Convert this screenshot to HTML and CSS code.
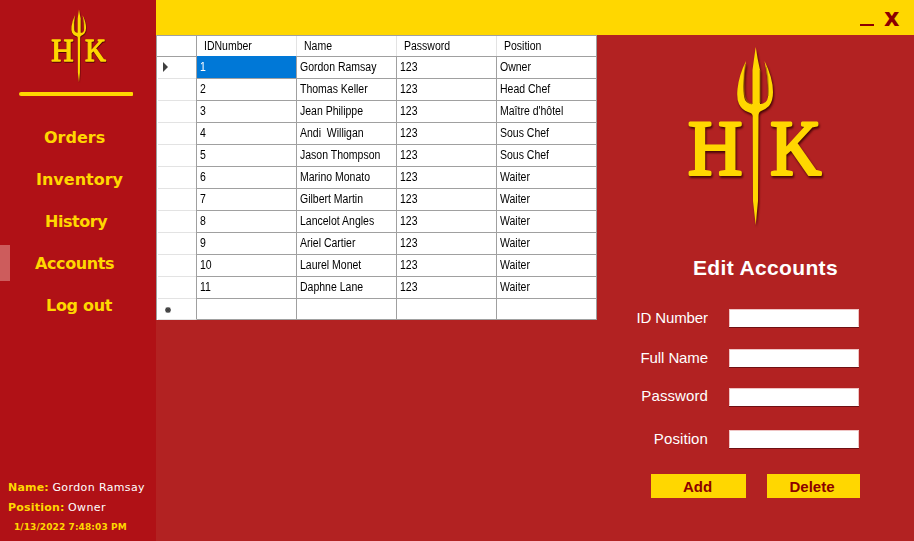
FILE: index.html
```html
<!DOCTYPE html>
<html lang="en">
<head>
<meta charset="utf-8">
<title>Accounts</title>
<link rel="stylesheet" href="styles.css">
</head>
<body>
<div class="app">
  <aside class="sidebar">
    <svg class="logo-small" viewBox="0 0 140 184">
      <g class="mark">
        <text x="2.900" y="128" textLength="54.400" lengthAdjust="spacingAndGlyphs">H</text>
        <text x="85.200" y="128" textLength="51" lengthAdjust="spacingAndGlyphs">K</text>
        <path d="M70.700 1L72.700 13L75 24V58Q82 58 83 51Q84 36 79.500 15Q88 32 88 46Q88 55 84 60Q81 63 76 65Q73.500 66 73.500 70L73 155L70.700 179L68 155L67.700 70Q67.500 67 63 66Q57 64 54 58Q51.500 53 52.500 43Q54 29 61 15Q57.500 35 59 50Q60 58 67.500 58V24L69 13Z"/>
        <path class="shade" d="M60.500 18Q58 33 59.500 49Q61 57 67 58M75 24V57M81 21Q84 34 83 50"/>
      </g>
    </svg>
    <div class="rule"></div>
    <nav class="nav">
      <a class="orders">Orders</a>
      <a class="inventory">Inventory</a>
      <a class="history">History</a>
      <a class="accounts active">Accounts</a>
      <a class="logout">Log out</a>
    </nav>
    <footer class="session">
      <p><b>Name:</b> <span>Gordon Ramsay</span></p>
      <p><b>Position:</b> <span>Owner</span></p>
      <time>1/13/2022 7:48:03 PM</time>
    </footer>
  </aside>
  <main class="main">
    <header class="titlebar">
      <svg width="74" height="35"><path class="minimize" d="M20 24h14v2H20z"/></svg>
      <span class="close">x</span>
    </header>
    <div class="content">
      <div class="grid">
        <div class="row head"><i></i><span><b>IDNumber</b></span><span><b>Name</b></span><span><b>Password</b></span><span><b>Position</b></span></div>
        <div class="row"><i><svg width="6" height="10"><path d="M0 0L5 5L0 10z"/></svg></i><span class="selected"><b>1</b></span><span><b>Gordon Ramsay</b></span><span><b>123</b></span><span><b>Owner</b></span></div>
        <div class="row"><i></i><span><b>2</b></span><span><b>Thomas Keller</b></span><span><b>123</b></span><span><b>Head Chef</b></span></div>
        <div class="row"><i></i><span><b>3</b></span><span><b>Jean Philippe</b></span><span><b>123</b></span><span><b>Maître d'hôtel</b></span></div>
        <div class="row"><i></i><span><b>4</b></span><span><b>Andi&nbsp; Willigan</b></span><span><b>123</b></span><span><b>Sous Chef</b></span></div>
        <div class="row"><i></i><span><b>5</b></span><span><b>Jason Thompson</b></span><span><b>123</b></span><span><b>Sous Chef</b></span></div>
        <div class="row"><i></i><span><b>6</b></span><span><b>Marino Monato</b></span><span><b>123</b></span><span><b>Waiter</b></span></div>
        <div class="row"><i></i><span><b>7</b></span><span><b>Gilbert Martin</b></span><span><b>123</b></span><span><b>Waiter</b></span></div>
        <div class="row"><i></i><span><b>8</b></span><span><b>Lancelot Angles</b></span><span><b>123</b></span><span><b>Waiter</b></span></div>
        <div class="row"><i></i><span><b>9</b></span><span><b>Ariel Cartier</b></span><span><b>123</b></span><span><b>Waiter</b></span></div>
        <div class="row"><i></i><span><b>10</b></span><span><b>Laurel Monet</b></span><span><b>123</b></span><span><b>Waiter</b></span></div>
        <div class="row"><i></i><span><b>11</b></span><span><b>Daphne Lane</b></span><span><b>123</b></span><span><b>Waiter</b></span></div>
        <div class="row"><i class="new"><svg width="6" height="6"><path class="star" d="M3 0V6M0 3H6M.8.8L5.200 5.200M5.200.8L.8 5.200"/></svg></i><span></span><span></span><span></span><span></span></div>
      </div>
      <section class="editor">
        <svg class="logo-large" viewBox="0 0 140 184">
          <g class="mark">
            <text x="2.900" y="128" textLength="54.400" lengthAdjust="spacingAndGlyphs">H</text>
            <text x="85.200" y="128" textLength="51" lengthAdjust="spacingAndGlyphs">K</text>
            <path d="M70.700 1L72.700 13L75 24V58Q82 58 83 51Q84 36 79.500 15Q88 32 88 46Q88 55 84 60Q81 63 76 65Q73.500 66 73.500 70L73 155L70.700 179L68 155L67.700 70Q67.500 67 63 66Q57 64 54 58Q51.500 53 52.500 43Q54 29 61 15Q57.500 35 59 50Q60 58 67.500 58V24L69 13Z"/>
            <path class="shade" d="M60.500 18Q58 33 59.500 49Q61 57 67 58M75 24V57M81 21Q84 34 83 50"/>
          </g>
        </svg>
        <h1>Edit Accounts</h1>
        <form class="fields">
          <label for="id">ID Number</label><input id="id">
          <label for="name">Full Name</label><input id="name">
          <label class="wide raised" for="pass">Password</label><input id="pass">
          <label class="wide" for="pos">Position</label><input id="pos">
        </form>
        <div class="actions"><button class="add">Add</button><button class="delete">Delete</button></div>
      </section>
    </div>
  </main>
</div>
</body>
</html>
```
FILE: styles.css
```css
* { box-sizing: border-box; }
body { margin: 0; overflow: hidden; }
.app { display: flex; width: 914px; height: 541px; background: #b22222; }

.mark { fill: #ffd700; filter: drop-shadow(1.5px 2px 1px rgba(50, 0, 0, .85)); }
.mark text { font: 78px "Liberation Serif", serif; stroke: #ffd700; stroke-width: 3.200; stroke-linejoin: round; }
.shade { fill: none; stroke: #9c6a00; stroke-width: 1.300; opacity: .65; }

.sidebar { width: 156px; display: flex; flex-direction: column; background: #b01116; font-family: "DejaVu Sans", sans-serif; }
.logo-small { width: 57.4px; height: 75.400px; margin: 9px 0 0 49.5px; }
.rule { width: 114px; height: 4px; margin: 7.600px 0 0 19px; border-radius: 2px 1px 1px 2px; background: #ffd700; }
.nav { display: flex; flex-direction: column; gap: 6px; margin-top: 23px; }
.nav a { height: 36px; line-height: 37px; font-size: 16px; font-weight: bold; color: #ffd700; border-left: 10px solid transparent; white-space: nowrap; }
.nav .active { border-left-color: #cd5c5c; }
.orders { padding-left: 34px; }
.inventory { padding-left: 26px; }
.history { padding-left: 35px; letter-spacing: -.45px; }
.accounts { padding-left: 25px; letter-spacing: -.4px; }
.logout { padding-left: 36px; letter-spacing: -.3px; }
.session { margin: auto 0 0 8px; height: 64px; font-size: 11px; color: #ffd700; white-space: nowrap; }
.session p { margin: 0; height: 20px; line-height: 21px; }
.session b { letter-spacing: .2px; }
.session span { color: #fff; letter-spacing: .38px; }
.session time { display: block; padding-left: 6px; line-height: 21px; font-size: 9px; font-weight: bold; letter-spacing: .1px; }

.main { flex: 1; display: flex; flex-direction: column; }
.titlebar { height: 35px; display: flex; justify-content: flex-end; background: #ffd700; color: #8b0000; }
.titlebar svg { width: 44px; }
.minimize { fill: #8b0000; }
.close { width: 30px; font: bold 24px/37px "DejaVu Sans", sans-serif; }
.content { flex: 1; display: flex; }

.grid { width: 441px; height: 285px; background: #fff; border: solid #a0a0a0; border-width: 1px 0 0 1px; color: #000; font: 12px "Liberation Sans", sans-serif; }
.row { display: grid; grid-template-columns: 40px repeat(4, 100px); height: 22px; line-height: 22px; }
.row span { padding-left: 3px; border: solid #a0a0a0; border-width: 0 1px 1px 0; white-space: nowrap; }
.row b { display: inline-block; font-weight: normal; transform: scaleX(.875); transform-origin: left; }
.row i { display: flex; align-items: center; padding-left: 5px; margin-left: 1px; border-right: 1px solid #a0a0a0; border-bottom: 1px solid #e3e3e3; }
.row svg { fill: #404040; }
.row .new { padding: 2px 0 0 7px; }
.star { stroke: #404040; stroke-width: 1.300; }
.row .selected { background: #0078d7; color: #fff; }
.head { height: 20px; line-height: 20px; }
.head span { padding-left: 7px; border-right-color: #e3e3e3; }
.head span:last-child { border-right-color: #a0a0a0; }
.head i { margin: 0; border-bottom-color: #a0a0a0; }

.editor { flex: 1; display: flex; flex-direction: column; font-family: "Liberation Sans", sans-serif; color: #fff; }
.logo-large { width: 140px; height: 184px; margin: 11px 0 0 88px; }
h1 { margin: 26px 0 0 96px; height: 24px; font-size: 21px; line-height: 24px; letter-spacing: .35px; white-space: nowrap; }
.fields { display: grid; grid-template-columns: 111px 130px; grid-template-rows: 40px 39px 42px 18px; column-gap: 21px; margin-top: 29px; align-items: start; }
.fields label { text-align: right; font-size: 15px; line-height: 18px; letter-spacing: -.1px; }
.fields .wide { letter-spacing: .1px; }
.fields .raised { margin-top: -1px; }
.fields input { width: 130px; height: 18px; padding: 0; background: #fff; border: 1px solid #efc4c4; border-bottom-color: #fff; border-radius: 0; box-shadow: 0 1px 0 #6e1014; }
.actions { display: flex; gap: 21px; margin: 26px 0 0 54px; }
.actions button { width: 95px; height: 24px; padding: 0; border: 0; background: #ffd700; color: #8b0000; font: bold 15px "Liberation Sans", sans-serif; }
.actions .delete { width: 93px; padding-right: 3px; }
.actions .add { padding-right: 2px; }
```
